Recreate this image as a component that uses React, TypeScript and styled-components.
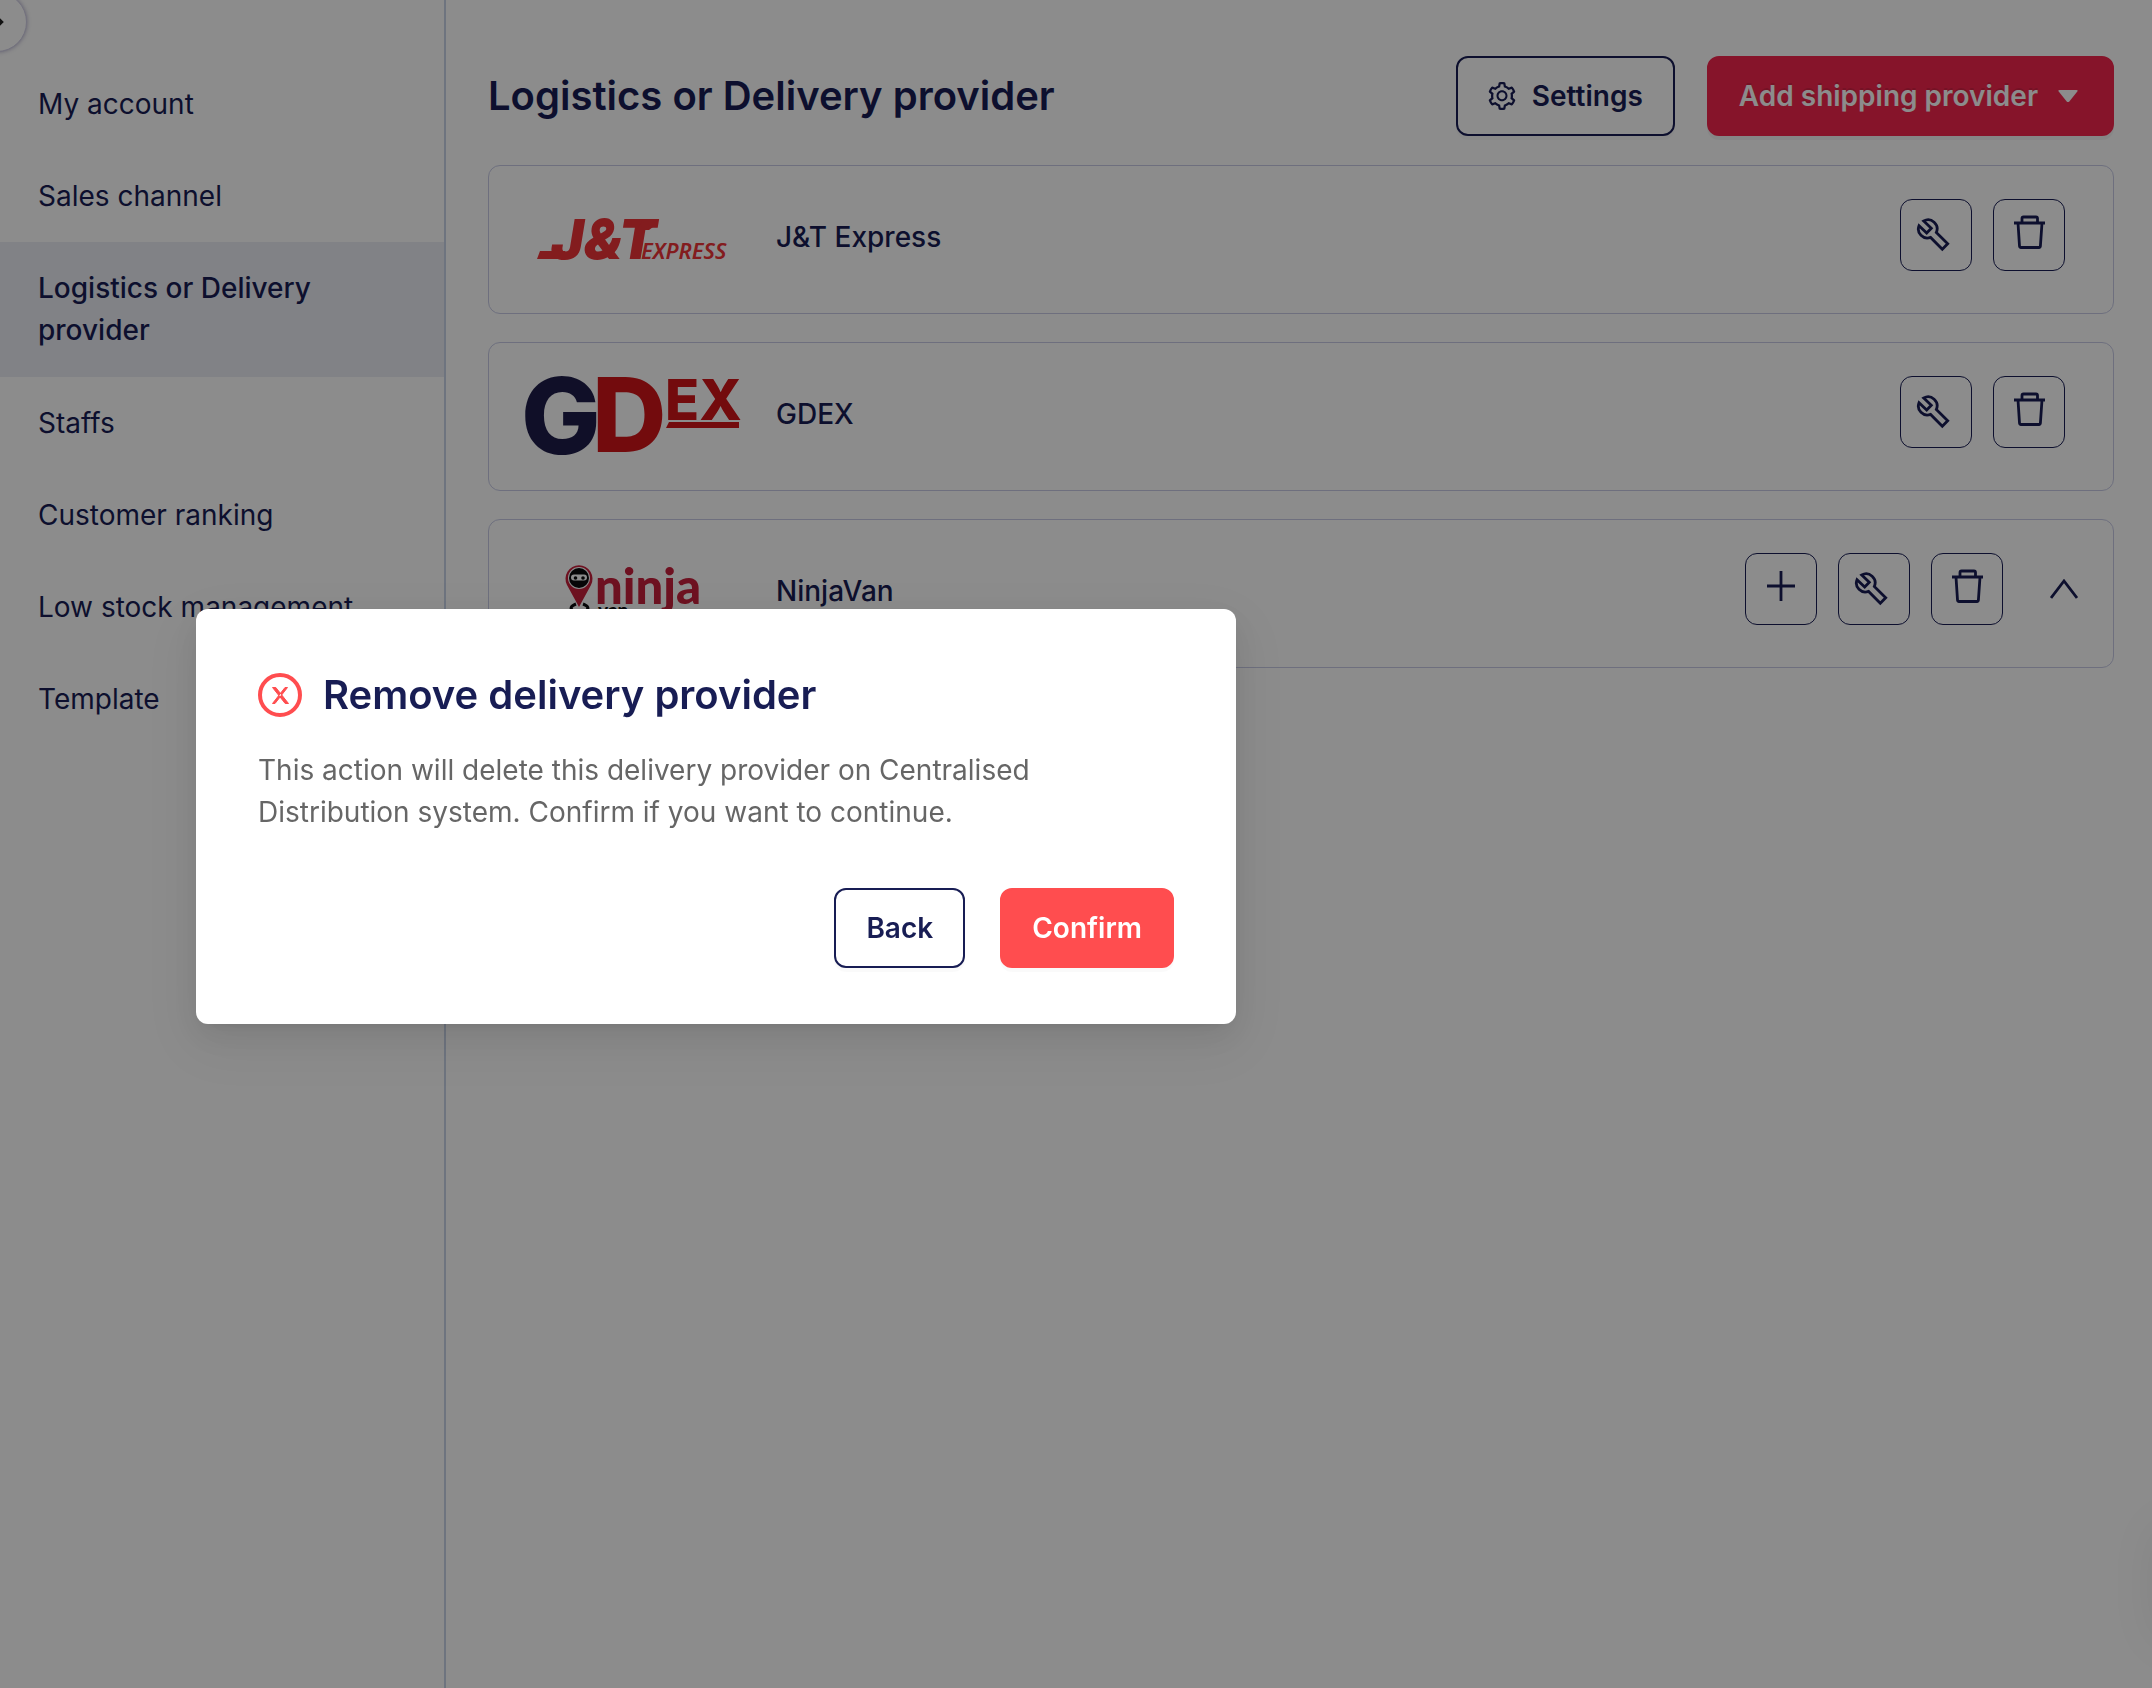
import React from "react";
import styled, { createGlobalStyle, css } from "styled-components";
import { AiOutlineSetting } from "react-icons/ai";

const navy = "#181d54";
const line = "#c9d4e8";
const cardLine = "#c8cbe6";

const GlobalStyle = createGlobalStyle`
  *, *::before, *::after { box-sizing: border-box; }
  body {
    margin: 0;
    background: #ffffff;
    color: ${navy};
    font-family: Inter, "Liberation Sans", sans-serif;
    font-size: 28px;
    line-height: 42px;
  }
  button { font: inherit; cursor: pointer; }
`;

const Page = styled.div`
  display: grid;
  grid-template-columns: 446px minmax(0, 1fr);
  min-height: 100vh;
`;

const Sidebar = styled.aside`
  padding-top: 58px;
  border-right: 2px solid ${line};
`;

const NavList = styled.ul`
  list-style: none;
  margin: 0;
  padding: 0;
`;

const NavLink = styled.a<{ $active?: boolean }>`
  display: block;
  padding: 25px 72px 25px 38px;
  color: ${navy};
  text-decoration: none;
  ${(p) =>
    p.$active &&
    css`
      border-bottom: 1px solid #ebedf5;
      background: #ebedf5;
      font-weight: 500;
    `}
`;

const CollapseToggle = styled.button`
  position: absolute;
  top: -8px;
  left: -33px;
  width: 60px;
  height: 60px;
  padding: 0;
  display: grid;
  place-items: center;
  border: 1px solid #d2cfe6;
  border-radius: 50%;
  background: #ffffff;
  box-shadow: 0 0 4px rgba(60, 50, 120, 0.4);
`;

const Main = styled.main`
  padding: 56px 38px 56px 42px;
`;

const Header = styled.header`
  display: flex;
  align-items: center;
  gap: 32px;
  margin-bottom: 29px;
`;

const Title = styled.h1`
  flex: 1;
  margin: 0;
  font-size: 40px;
  line-height: 60px;
  font-weight: 600;
`;

const Button = styled.button<{ $tone?: "outline" | "primary" | "danger" }>`
  display: inline-flex;
  align-items: center;
  gap: 16px;
  height: 80px;
  padding: 0 30px;
  border: 2px solid ${navy};
  border-radius: 12px;
  background: #ffffff;
  color: ${navy};
  font-weight: 600;
  box-shadow: 0 4px 0 rgba(0, 0, 0, 0.02);
  ${(p) =>
    p.$tone === "primary" &&
    css`
      border-color: #f5264e;
      background: #f5264e;
      color: #ffffff;
      text-shadow: 0 -2px 0 rgba(0, 0, 0, 0.12);
      box-shadow: 0 4px 0 rgba(0, 0, 0, 0.04);
    `}
  ${(p) =>
    p.$tone === "danger" &&
    css`
      border-color: #ff4d4f;
      background: #ff4d4f;
      color: #ffffff;
    `}
`;

const GearIcon = styled(AiOutlineSetting)`
  width: 32px;
  height: 32px;
  margin: 0 -2px;
`;

const ProviderList = styled.ul`
  display: grid;
  gap: 28px;
  margin: 0;
  padding: 0;
  list-style: none;
`;

const Card = styled.li<{ $expandable?: boolean }>`
  display: flex;
  align-items: center;
  gap: 37px;
  padding: 25px ${(p) => (p.$expandable ? 35 : 48)}px 34px 36px;
  border: 1px solid ${cardLine};
  border-radius: 12px;
`;

const Logo = styled.svg`
  display: block;
  flex: none;
  width: 214px;
  height: 88px;
  overflow: visible;
`;

const ProviderName = styled.span`
  flex: 1;
  padding-top: 4px;
  font-weight: 500;
`;

const Actions = styled.div`
  display: flex;
  align-items: center;
  gap: 21px;
`;

const IconButton = styled.button`
  display: grid;
  place-items: center;
  width: 72px;
  height: 72px;
  padding: 0;
  border: 1px solid ${navy};
  border-radius: 12px;
  background: #ffffff;
  color: ${navy};
`;

const ExpandButton = styled.button`
  display: grid;
  place-items: center;
  width: 28px;
  height: 72px;
  margin-left: 26px;
  padding: 0;
  border: 0;
  background: none;
  color: ${navy};
`;

const Stroked = styled.svg`
  display: block;
  fill: none;
  stroke: currentColor;
  stroke-width: 2.8;
`;

const SideHandle = styled.div`
  position: fixed;
  right: -100px;
  bottom: 48px;
  width: 96px;
  height: 112px;
  border-radius: 12px;
  box-shadow: 0 0 48px rgba(0, 0, 0, 0.08);
`;

const Overlay = styled.div`
  position: fixed;
  inset: 0;
  padding: 609px 0 0 196px;
  background: rgba(0, 0, 0, 0.45);
`;

const Dialog = styled.section`
  width: 1040px;
  padding: 56px 62px;
  border-radius: 12px;
  background: #ffffff;
  box-shadow: 0 6px 12px -8px rgba(0, 0, 0, 0.12), 0 12px 32px rgba(0, 0, 0, 0.08),
    0 18px 56px 16px rgba(0, 0, 0, 0.05);
`;

const DialogHeader = styled.div`
  display: flex;
  align-items: center;
  gap: 21px;
`;

const DialogTitle = styled.h2`
  margin: 0;
  font-size: 40px;
  line-height: 60px;
  font-weight: 600;
`;

const DialogText = styled.p`
  margin: 24px 0 55px;
  color: #666666;
`;

const DialogActions = styled.div`
  display: flex;
  justify-content: flex-end;
  gap: 35px;
`;

const WrenchIcon = () => (
  <Stroked width="40" height="34" viewBox="0 0 40 34" aria-hidden="true">
    <path d="M7.700 3L15.300 10.300L10.700 15L3 7.700A9 9 0 0 0 14.600 19.400L26.300 31.300L31.700 25.800L20.300 14.500A9 9 0 0 0 7.700 3Z" />
  </Stroked>
);

const TrashIcon = () => (
  <Stroked width="34" height="40" viewBox="-2 0 34 40" strokeLinejoin="round" aria-hidden="true">
    <path d="M0 8H31M8 8V3.500Q8 2 9.500 2H22Q23.500 2 23.500 3.500V8M4 8L5.500 31Q5.600 32.500 7 32.500H25Q26.300 32.500 26.400 31L28 8" />
  </Stroked>
);

const PlusIcon = () => (
  <Stroked width="32" height="38" viewBox="0 0 32 38" aria-hidden="true">
    <path d="M2 16H30M16 1V31" />
  </Stroked>
);

const ChevronUpIcon = () => (
  <Stroked width="28" height="20" viewBox="0 0 28 20" aria-hidden="true">
    <path d="M1 19L14 2L27 19" />
  </Stroked>
);

const CaretIcon = () => (
  <svg width="28" height="14" viewBox="0 0 28 14" aria-hidden="true">
    <path d="M5.500 1H22.500Q24.500 1 23.300 2.600L15.300 12.400Q14 13.800 12.700 12.400L4.700 2.600Q3.500 1 5.500 1Z" fill="currentColor" />
  </svg>
);

const JntLogo = () => (
  <Logo viewBox="0 0 214 88" role="img" aria-label="J&T Express logo" fill="#ee3338">
    <path d="M15 60H40L44 68H12Z" />
    <text x="26" y="68" fontFamily="Inter, sans-serif" fontSize="55" fontWeight="900" fontStyle="italic">J&amp;T</text>
    <path d="M118 28H134L131 31H119L118 32H130L127 35H117L116 36H128L124 39H112Z" />
    <text x="116" y="68" fontFamily="'Noto Sans', sans-serif" fontSize="22" fontWeight="600" fontStyle="italic">EXPRESS</text>
  </Logo>
);

const GdexLogo = () => (
  <Logo viewBox="0 0 214 88" role="img" aria-label="GDEX logo" fill="#d11418" fontFamily="Inter, sans-serif" fontWeight="800">
    <text x="67" y="84" fontSize="103">D</text>
    <text x="-4" y="86" fontSize="106" fill="#1e1d49">G</text>
    <text x="140" y="52" fontSize="56">EX</text>
    <path d="M144 54H214V60H141Z" />
  </Logo>
);

const NinjaVanLogo = () => (
  <Logo viewBox="0 0 214 88" role="img" aria-label="Ninja Van logo">
    <path d="M54 62L42 40A13.500 13.500 0 1 1 66 40Z" fill="#c8203c" />
    <circle cx="54" cy="33" r="11" fill="#ffffff" />
    <circle cx="54" cy="33" r="10" fill="#0b0b0d" />
    <rect x="46" y="29.500" width="16" height="6" rx="3" fill="#ffffff" />
    <circle cx="50.500" cy="33" r="1.800" fill="#0b0b0d" />
    <circle cx="58" cy="33" r="1.800" fill="#0b0b0d" />
    <path d="M51 59Q43 62 48 66M58 59Q66 62 61 66" fill="none" stroke="#0b0b0d" strokeWidth="3" />
    <text x="70" y="59" fontFamily="Lato, sans-serif" fontSize="49" fontWeight="900" fill="#c8203c">ninja</text>
    <text x="73" y="72" fontFamily="Lato, sans-serif" fontSize="19" fontWeight="900" fill="#0b0b0d">van</text>
  </Logo>
);

const navItems = [
  "My account",
  "Sales channel",
  "Logistics or Delivery provider",
  "Staffs",
  "Customer ranking",
  "Low stock management",
  "Template",
];

const providers = [
  { name: "J&T Express", logo: <JntLogo />, expandable: false },
  { name: "GDEX", logo: <GdexLogo />, expandable: false },
  { name: "NinjaVan", logo: <NinjaVanLogo />, expandable: true },
];

export default function App() {
  return (
    <>
      <GlobalStyle />
      <Page>
        <Sidebar>
          <nav>
            <NavList>
              {navItems.map((item) => (
                <li key={item}>
                  <NavLink href="#" $active={item.startsWith("Logistics")}>
                    {item}
                  </NavLink>
                </li>
              ))}
            </NavList>
          </nav>
          <CollapseToggle aria-label="Expand menu">
            <svg width="20" height="16" viewBox="0 0 20 16" fill="none" stroke="#222222" strokeWidth="4" aria-hidden="true">
              <path d="M0 8H14M8 2L14 8L8 14" />
            </svg>
          </CollapseToggle>
        </Sidebar>
        <Main>
          <Header>
            <Title>Logistics or Delivery provider</Title>
            <Button>
              <GearIcon aria-hidden="true" />
              Settings
            </Button>
            <Button $tone="primary">
              Add shipping provider
              <CaretIcon />
            </Button>
          </Header>
          <ProviderList>
            {providers.map((p) => (
              <Card key={p.name} $expandable={p.expandable}>
                {p.logo}
                <ProviderName>{p.name}</ProviderName>
                <Actions>
                  {p.expandable && (
                    <IconButton aria-label={`Add ${p.name} account`}>
                      <PlusIcon />
                    </IconButton>
                  )}
                  <IconButton aria-label={`Configure ${p.name}`}>
                    <WrenchIcon />
                  </IconButton>
                  <IconButton aria-label={`Remove ${p.name}`}>
                    <TrashIcon />
                  </IconButton>
                  {p.expandable && (
                    <ExpandButton aria-label={`Collapse ${p.name}`}>
                      <ChevronUpIcon />
                    </ExpandButton>
                  )}
                </Actions>
              </Card>
            ))}
          </ProviderList>
        </Main>
      </Page>
      <SideHandle />
      <Overlay>
        <Dialog role="dialog" aria-modal="true" aria-labelledby="dialog-title">
          <DialogHeader>
            <svg width="44" height="44" viewBox="0 0 44 44" fill="none" stroke="#ff4d4f" aria-hidden="true">
              <circle cx="22" cy="22" r="20" strokeWidth="4" />
              <path d="M14.500 14.500H17.800L30.500 30.500H27.200ZM29.500 14.500H27L14.500 30.500H17Z" fill="#ff4d4f" strokeWidth="1" />
            </svg>
            <DialogTitle id="dialog-title">Remove delivery provider</DialogTitle>
          </DialogHeader>
          <DialogText>
            This action will delete this delivery provider on Centralised Distribution system. Confirm if you want to
            continue.
          </DialogText>
          <DialogActions>
            <Button>Back</Button>
            <Button $tone="danger">Confirm</Button>
          </DialogActions>
        </Dialog>
      </Overlay>
    </>
  );
}
